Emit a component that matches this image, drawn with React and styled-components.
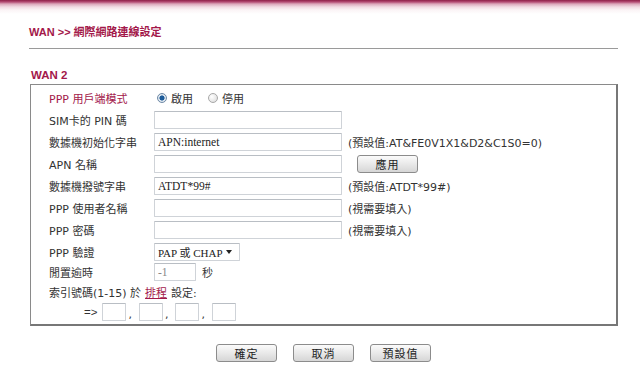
import styled, { createGlobalStyle } from "styled-components";

const GlobalStyle = createGlobalStyle`
  html, body {
    margin: 0;
    padding: 0;
    background: #fff;
  }
  body {
    font-family: "DejaVu Sans", "Noto Sans CJK TC", sans-serif;
    font-size: 11px;
    color: #333;
  }
`;

const CRIMSON = "#a3184a";

const TopBar = styled.div`
  height: 14px;
  background: linear-gradient(
    to bottom,
    #8e1f47 0,
    #b54d75 2px,
    #dca8bb 4px,
    #f1dce4 7px,
    #fbf4f6 10px,
    #fff 14px
  );
`;

const Content = styled.div`
  padding: 0 22px 0 29px;
`;

const PageTitle = styled.div`
  margin-top: 11px;
  line-height: 14px;
  font-family: "Liberation Sans", "Noto Sans CJK TC", sans-serif;
  font-size: 11px;
  font-weight: bold;
  color: ${CRIMSON};
`;

const Rule = styled.div`
  margin-top: 9px;
  height: 1px;
  background: #9a9a9a;
`;

const SectionTitle = styled.div`
  margin: 19px 0 2px 2px;
  line-height: 14px;
  font-family: "Liberation Sans", sans-serif;
  font-size: 11.5px;
  font-weight: bold;
  color: ${CRIMSON};
`;

const Panel = styled.div`
  margin-left: 1px;
  width: 588px;
  box-sizing: border-box;
  border: 1px solid #8a8a8a;
  border-right: 2px solid #777;
  border-bottom: 2px solid #777;
  padding: 2px 0 2px 18px;
`;

const Row = styled.div`
  display: grid;
  grid-template-columns: 105px auto;
  align-items: center;
  height: ${(p) => p.$h || 22}px;
`;

const Label = styled.div`
  white-space: nowrap;
  color: ${(p) => (p.$accent ? CRIMSON : "#333")};
  font-size: 11px;
`;

const Field = styled.div`
  display: flex;
  align-items: center;
  gap: ${(p) => p.$gap ?? 6}px;
`;

const TextBox = styled.div`
  box-sizing: border-box;
  width: ${(p) => p.$w || 188}px;
  height: 18px;
  border: 1px solid #cfd3d8;
  border-top-color: #b9bec4;
  border-radius: 1px;
  background: #fff;
  padding: 0 3px;
  display: flex;
  align-items: center;
  font-family: "Liberation Serif", "Noto Sans CJK TC", serif;
  font-size: 11.5px;
  color: ${(p) => (p.$muted ? "#888" : "#222")};
`;

const Hint = styled.span`
  color: #333;
  font-size: 11px;
  white-space: nowrap;
`;

const Radio = styled.span`
  display: inline-flex;
  align-items: center;
  gap: 4px;
  margin-left: ${(p) => p.$indent || 0}px;
  margin-right: 15px;
  color: #333;
`;

const RadioDot = styled.span`
  width: 10px;
  height: 10px;
  border-radius: 50%;
  box-sizing: border-box;
  border: 1px solid ${(p) => (p.$on ? "#6f8aa6" : "#a8a8a8")};
  background: ${(p) =>
    p.$on
      ? "radial-gradient(circle, #1d5c9a 0 2.3px, #dde6ef 2.8px)"
      : "radial-gradient(circle at 35% 35%, #fff, #d8d8d8)"};
`;

const Button = styled.div`
  box-sizing: border-box;
  width: ${(p) => p.$w || 61}px;
  height: 18px;
  display: flex;
  align-items: center;
  justify-content: center;
  border: 1px solid #8c8c8c;
  border-radius: 3px;
  background: linear-gradient(#fbfbfb, #e9e9e9 50%, #d6d6d6);
  color: #222;
  font-size: 11px;
  letter-spacing: 1px;
`;

const SelectBox = styled(TextBox)`
  width: 86px;
  justify-content: space-between;
  padding-right: 7px;
  font-size: 11px;
`;

const Caret = styled.span`
  width: 0;
  height: 0;
  border-left: 3.5px solid transparent;
  border-right: 3.5px solid transparent;
  border-top: 4px solid #222;
`;

const Link = styled.span`
  color: ${CRIMSON};
  text-decoration: underline;
  margin: 0 4px;
`;

const IndexRow = styled.div`
  display: flex;
  align-items: center;
  height: 20px;
  padding-left: 35px;
`;

const Arrow = styled.span`
  font-family: "Liberation Sans", sans-serif;
  font-size: 11.5px;
  margin-right: 5px;
`;

const Comma = styled.span`
  margin: 4px 7px 0 2px;
`;

const Footer = styled.div`
  display: flex;
  justify-content: center;
  gap: 16px;
  margin-top: 18px;
`;

export default function App() {
  return (
    <>
      <GlobalStyle />
      <TopBar />
      <Content>
        <PageTitle>WAN &gt;&gt; 網際網路連線設定</PageTitle>
        <Rule />
        <SectionTitle>WAN 2</SectionTitle>
        <Panel>
          <Row>
            <Label $accent>PPP 用戶端模式</Label>
            <Field $gap={0}>
              <Radio $indent={3}>
                <RadioDot $on />
                啟用
              </Radio>
              <Radio>
                <RadioDot />
                停用
              </Radio>
            </Field>
          </Row>
          <Row>
            <Label>SIM卡的 PIN 碼</Label>
            <Field>
              <TextBox />
            </Field>
          </Row>
          <Row>
            <Label>數據機初始化字串</Label>
            <Field>
              <TextBox>APN:internet</TextBox>
              <Hint>(預設值:AT&amp;FE0V1X1&amp;D2&amp;C1S0=0)</Hint>
            </Field>
          </Row>
          <Row>
            <Label>APN 名稱</Label>
            <Field $gap={15}>
              <TextBox />
              <Button>應用</Button>
            </Field>
          </Row>
          <Row>
            <Label>數據機撥號字串</Label>
            <Field>
              <TextBox>ATDT*99#</TextBox>
              <Hint>(預設值:ATDT*99#)</Hint>
            </Field>
          </Row>
          <Row>
            <Label>PPP 使用者名稱</Label>
            <Field>
              <TextBox />
              <Hint>(視需要填入)</Hint>
            </Field>
          </Row>
          <Row>
            <Label>PPP 密碼</Label>
            <Field>
              <TextBox />
              <Hint>(視需要填入)</Hint>
            </Field>
          </Row>
          <Row $h={21}>
            <Label>PPP 驗證</Label>
            <Field>
              <SelectBox>
                PAP 或 CHAP
                <Caret />
              </SelectBox>
            </Field>
          </Row>
          <Row $h={20}>
            <Label>閒置逾時</Label>
            <Field>
              <TextBox $w={42} $muted>
                -1
              </TextBox>
              <Hint>秒</Hint>
            </Field>
          </Row>
          <Row $h={20}>
            <Label>
              索引號碼(1-15) 於<Link>排程</Link>設定:
            </Label>
          </Row>
          <IndexRow>
            <Arrow>=&gt;</Arrow>
            <TextBox $w={24} />
            <Comma>,</Comma>
            <TextBox $w={24} />
            <Comma>,</Comma>
            <TextBox $w={24} />
            <Comma>,</Comma>
            <TextBox $w={24} />
          </IndexRow>
        </Panel>
        <Footer>
          <Button>確定</Button>
          <Button>取消</Button>
          <Button>預設值</Button>
        </Footer>
      </Content>
    </>
  );
}
